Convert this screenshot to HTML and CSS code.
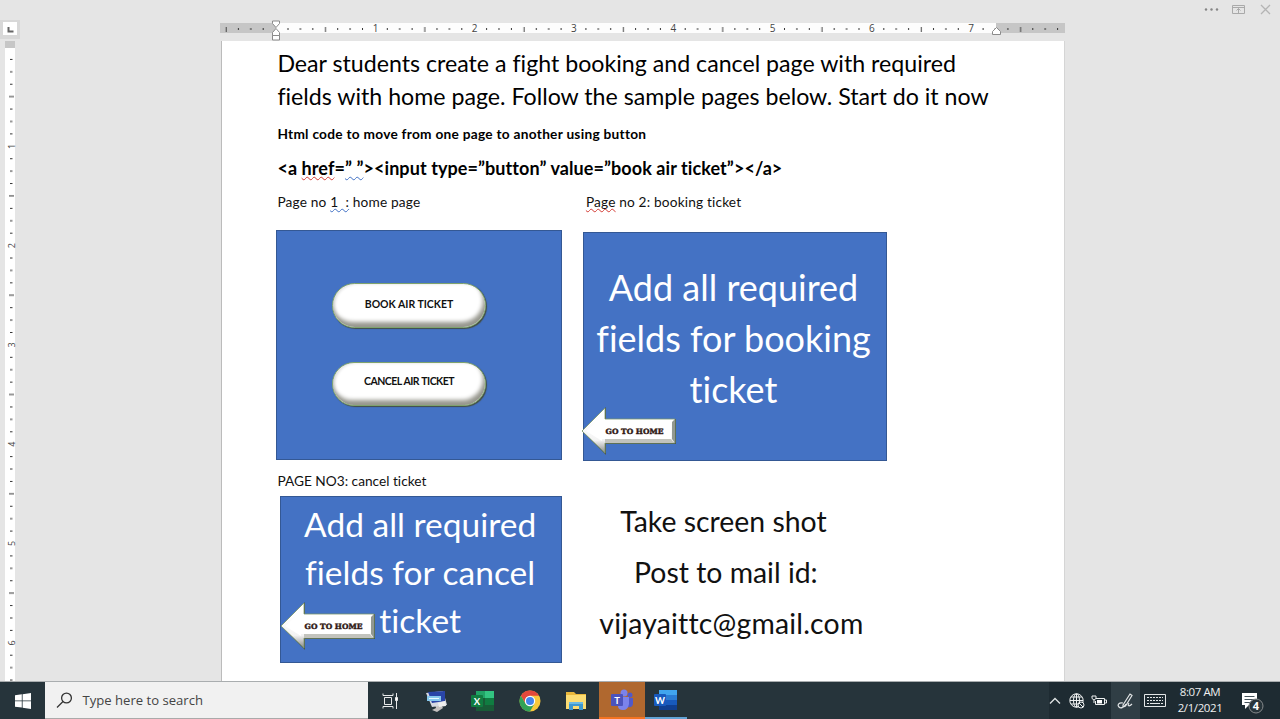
FILE: index.html
```html
<!DOCTYPE html>
<html lang="en">
<head>
<meta charset="utf-8">
<title>Document</title>
<link rel="stylesheet" href="styles.css">
</head>
<body>
<div class="desktop">
  <header class="titlebar">
    <svg width="70" height="20" viewBox="0 0 70 20" fill="none">
      <g fill="#858585"><circle cx="1" cy="9.5" r="1.2"/><circle cx="6.500" cy="9.5" r="1.2"/><circle cx="12" cy="9.5" r="1.2"/></g>
      <path d="M27.500 5.500h12v8h-12zM27.500 7.500h12M33.500 13V8.500M31.500 10.500l2-2 2 2" stroke="#a9a9a9"/>
      <path d="M56 5l9 9M65 5l-9 9" stroke="#b4b4b4" stroke-width="1.300"/>
    </svg>
  </header>
  <div class="workspace">
    <aside class="rail">
      <div class="tabstop"><svg width="14" height="13"><path d="M5.500 5v4.500h5" fill="none" stroke="#666" stroke-width="2"/></svg></div>
      <svg class="vruler" width="15" height="641" viewBox="0 0 15 641">
        <defs>
          <pattern id="vt" y="6" width="11" height="99.3" patternUnits="userSpaceOnUse">
            <path d="M5 12.400h2.500M5 24.800h2.500M5 37.200h2.500M5 62.100h2.500M5 74.500h2.500M5 86.900h2.500" stroke="#333"/>
            <path d="M4 49.600h5" stroke="#333"/>
          </pattern>
        </defs>
        <rect width="10" height="641" fill="#fff"/>
        <rect width="10" height="7" fill="#c6c6c6"/>
        <rect y="7" width="10" height="634" fill="url(#vt)"/>
        <g class="marks">
          <text transform="translate(9.500 105.300) rotate(-90)">1</text>
          <text transform="translate(9.500 204.600) rotate(-90)">2</text>
          <text transform="translate(9.500 303.900) rotate(-90)">3</text>
          <text transform="translate(9.500 403.200) rotate(-90)">4</text>
          <text transform="translate(9.500 502.500) rotate(-90)">5</text>
          <text transform="translate(9.500 601.800) rotate(-90)">6</text>
        </g>
      </svg>
    </aside>
    <main class="canvas">
      <svg class="hruler" width="845" height="21" viewBox="0 0 845 21">
        <defs>
          <pattern id="ht" x="55.600" width="99.3" height="21" patternUnits="userSpaceOnUse">
            <path d="M12.400 8v2M24.800 8v2M37.200 8v2M62.100 8v2M74.500 8v2M86.900 8v2" stroke="#333"/>
            <path d="M49.900 7v5" stroke="#444"/>
          </pattern>
        </defs>
        <rect y="3" width="845" height="10" fill="#c6c6c6"/>
        <rect x="56" y="3" width="720" height="10" fill="#fdfdfd"/>
        <rect width="838" height="21" fill="url(#ht)" x="2"/>
        <g class="marks">
          <text x="155.500" y="12">1</text><text x="254.700" y="12">2</text><text x="353.900" y="12">3</text><text x="453.300" y="12">4</text><text x="552.500" y="12">5</text><text x="651.900" y="12">6</text><text x="751.200" y="12">7</text>
        </g>
        <g fill="#fff" stroke="#8b8b8b">
          <path d="M52.500 1h7v2.500L56 7.500 52.500 3.500zM52.500 15.500v-3L56 8.500l3.500 4v3zM52.500 15.500h7v4.500h-7z"/>
          <path d="M772.500 14.500v-3L776.500 7.500l4 4v3z"/>
        </g>
      </svg>
      <article class="page">
        <h1 class="intro"><span class="l1">Dear students create a fight booking and cancel page with required</span><br><span class="l2">fields with home page. Follow the sample pages below. Start do it now</span></h1>
        <h2 class="sub">Html code to move from one page to another using button</h2>
        <p class="code">&lt;a <span class="spell">href</span>=<span class="gram">” ”</span>&gt;&lt;input type=”button” value=”book air ticket”&gt;&lt;/a&gt;</p>
        <div class="labels">
          <p class="label">Page no <span class="gram">1&nbsp; :</span> home page</p>
          <p class="label"><span class="spell">Page</span> no 2: booking ticket</p>
        </div>
        <div class="boards">
          <section class="board home">
            <div class="pill">BOOK AIR TICKET</div>
            <div class="pill tight">CANCEL AIR TICKET</div>
          </section>
          <section class="board booking">
            <p>Add all required<br>fields for booking<br>ticket</p>
            <svg class="arrow" width="96" height="50" viewBox="0 0 96 50"><use href="#arrow"/></svg>
          </section>
        </div>
        <p class="label third">PAGE NO3: cancel ticket</p>
        <div class="bottom">
          <section class="board cancel">
            <p>Add all required<br>fields for cancel<br><span class="last">ticket</span></p>
            <svg class="arrow" width="96" height="50" viewBox="0 0 96 50">
              <defs>
                <linearGradient id="face" x2="0" y2="1"><stop offset=".3" stop-color="#fff"/><stop offset=".72" stop-color="#f3f3f3"/><stop offset="1" stop-color="#888"/></linearGradient>
                <g id="arrow">
                  <path d="M1 25L25 1v12h70v25H25v11z" fill="#4d5b4c"/>
                  <path d="M1 25L24 2v11h70v24H24v10z" fill="url(#face)" stroke="#78956b" stroke-width=".8"/>
                  <path d="M24 37h69l-3-4H24z" fill="#c2c3bd"/>
                  <path d="M94 13v24l-3-4V16z" fill="#929891"/>
                  <path d="M5 25L21 10v6h69v17H21v2z" fill="#fff"/>
                  <text class="go" x="24.500" y="28" textLength="58" lengthAdjust="spacingAndGlyphs">GO TO HOME</text>
                </g>
              </defs>
              <use href="#arrow"/>
            </svg>
          </section>
          <section class="mail">
            <p class="m1">Take screen shot</p><p class="m2">Post to mail id:</p><p class="m3">vijayaittc@gmail.com</p>
          </section>
        </div>
      </article>
    </main>
  </div>
  <footer class="taskbar">
    <div class="start"><svg width="16" height="16" viewBox="0 0 16 16" fill="#fff"><path d="M0 2.200l6.800-.9v6.200H0zM7.600 1.200L16 0v7.500H7.600zM0 8.300h6.800v6.300L0 13.700zM7.600 8.300H16V16l-8.400-1.200z"/></svg></div>
    <div class="search"><svg width="17" height="16" viewBox="0 0 17 16" fill="none" stroke="#333" stroke-width="1.300"><circle cx="10.500" cy="6" r="4.900"/><path d="M7 9.500L1 15.500"/></svg><span>Type here to search</span></div>
    <div class="apps">
      <div class="app"><svg width="18" height="16" viewBox="0 0 18 16" fill="none" stroke="#e8eaeb"><path d="M1 .5v2h10v-2M1 15.500v-2h10v2M2.500 4.500h7v7h-7zM14.500 0v4M14.500 8v8"/><path d="M13.500 4.500h2v3h-2z" fill="#fff"/></svg></div>
      <div class="app"><svg width="24" height="24" viewBox="0 0 24 24"><path d="M10 15l5-1 3 5-6 4-5-2 4-2z" fill="#c5c1c0"/><path d="M1 4l17-2 4 14-15 2z" fill="#d6d9e2"/><path d="M3 3l17-1v10L7 14z" fill="#2945a8"/><path d="M2 7h14v5H2z" fill="#88c9ee"/><path d="M4 9.500h10" stroke="#e9faff"/><path d="M13 14l7-2 1 5-7 1z" fill="#eee"/></svg></div>
      <div class="app"><svg width="24" height="22" viewBox="0 0 24 22"><path d="M5 1h18v20H5z" fill="#21a366"/><path d="M14 1h9v7h-9z" fill="#33c481"/><path d="M5 8h9v7H5zM5 15h18v6H5z" fill="#185c37"/><path d="M14 8h9v7h-9z" fill="#107c41"/><rect y="5" width="12" height="12" rx="1" fill="#107c41"/><text class="letter" x="6" y="14.500">X</text></svg></div>
      <div class="app"><svg width="22" height="22" viewBox="0 0 22 22"><circle cx="11" cy="11" r="10.500" fill="#f9c83c"/><path d="M1.900 5.750A10.500 10.500 0 0 1 20.100 5.750H11L6.450 13.600z" fill="#e3483b"/><path d="M1.900 5.750A10.500 10.500 0 0 0 11 21.500L15.550 13.600 11 16.250 6.450 13.600z" fill="#32a257"/><circle cx="11" cy="11" r="5.200" fill="#fff"/><circle cx="11" cy="11" r="4" fill="#4384ec"/></svg></div>
      <div class="app"><svg width="22" height="20" viewBox="0 0 22 20"><path d="M1 1h8l2 2h10v15H1z" fill="#e9b73c"/><path d="M1 4h20v14H1z" fill="#fbdc73"/><path d="M4 11h14v8h-4v-4H8v4H4z" fill="#3d97cf"/><path d="M4 11h14v2H4z" fill="#69b9e4"/></svg></div>
      <div class="app teams"><svg width="24" height="22" viewBox="0 0 24 22"><circle cx="20" cy="6" r="2.500" fill="#5059c9"/><circle cx="14" cy="4" r="3.500" fill="#7b83eb"/><path d="M16 9h7v6q-1 4-5 3z" fill="#5059c9"/><path d="M8 8h11v7q-1 6-6 6t-5-4z" fill="#7b83eb"/><rect x="1" y="5" width="12" height="12" rx="1" fill="#4b53bc"/><text class="letter" x="7" y="14.500">T</text></svg></div>
      <div class="app word"><svg width="24" height="22" viewBox="0 0 24 22"><path d="M5 1h18v5H5z" fill="#41a5ee"/><path d="M5 6h18v5H5z" fill="#2b7cd3"/><path d="M5 11h18v5H5z" fill="#185abd"/><path d="M5 16h18v5H5z" fill="#103f91"/><rect y="5" width="12" height="12" rx="1" fill="#185abd"/><text class="letter" x="6" y="14.500">W</text></svg></div>
    </div>
    <div class="tray">
      <svg class="chev" width="12" height="8" viewBox="0 0 12 8" fill="none" stroke="#dfe3e4" stroke-width="1.300"><path d="M1 6.500l5-5 5 5"/></svg>
      <svg class="globe" width="16" height="16" viewBox="0 0 16 16" fill="none" stroke="#eef0f0"><circle cx="7.500" cy="7.500" r="6.700"/><ellipse cx="7.500" cy="7.500" rx="3" ry="6.700"/><path d="M1 7.500h13M2 4h11M2 11h11M7.500 1v13"/><circle cx="12" cy="12" r="3" fill="#1e2c33"/><path d="M10 10l4 4"/></svg>
      <svg class="batt" width="16" height="12" viewBox="0 0 16 12" fill="none" stroke="#eef0f0"><path d="M5 3.500h8.500v6h-9V6M14 5h1.500v3H14M1 1h4v2.500L3 5 1 3.500zM3 5v3"/><path d="M6 5h5v3.500H6z" fill="#fff" stroke="none"/></svg>
      <div class="pen"><svg width="18" height="18" viewBox="0 0 18 18" fill="none" stroke="#e3e6e7" stroke-width="1.200"><path d="M6 13L13 2l2 1.500L8.500 14 6 15zM6 11c-4-1-6 2-4 4s5 0 7-3M12 11c-2 3 0 4 3 1"/></svg></div>
      <svg class="keys" width="22" height="13" viewBox="0 0 22 13" fill="none" stroke="#e3e6e7"><path d="M.5.5h21v12H.5z"/><path d="M3 3.500h16M3 6.500h16" stroke-dasharray="2 1"/><path d="M3 9.500h2M6 9.500h10M17 9.500h2"/></svg>
      <div class="clock"><span>8:07 AM</span><span>2/1/2021</span></div>
      <svg class="note" width="24" height="24" viewBox="0 0 24 24"><path d="M1 3h15v12H8l-4 4v-4H1z" fill="#fff"/><path d="M3.500 6.500h10M3.500 9.500h10M3.500 12.500h6" stroke="#43525a"/><circle cx="15" cy="16" r="7" fill="#27343a" stroke="#85898b"/><text class="badge" x="15" y="20">4</text></svg>
    </div>
  </footer>
</div>
</body>
</html>
```
FILE: styles.css
```css
* { box-sizing: border-box; }
body { margin: 0; background: #e5e5e5; font-family: Lato, "Open Sans", sans-serif; font-variant-ligatures: none; color: #111; }
p, h1, h2 { margin: 0; font-weight: 400; white-space: nowrap; }
svg { display: block; flex: none; }
.desktop { width: 1280px; height: 719px; display: flex; flex-direction: column; overflow: hidden; }
.titlebar { height: 20px; display: flex; justify-content: flex-end; padding-right: 5px; }
.titlebar svg { overflow: visible; }
.workspace { height: 661px; display: flex; overflow: hidden; }
.rail { width: 220px; flex: none; }
.tabstop { width: 20px; height: 19px; background: #d8d8d8; padding: 2px 3px; margin-bottom: 2px; }
.tabstop svg { background: #fff; }
.vruler { margin-left: 5px; overflow: visible; }
.marks { font: 10px "Open Sans", sans-serif; fill: #444; text-anchor: middle; }
.vruler .marks { font-size: 9px; }
.canvas { width: 846px; flex: none; }
.page { width: 844px; height: 641px; margin-left: 1px; background: #fff; border-left: 1px solid #bbb; border-right: 1px solid #d5d5d5; padding: 5px 0 0 55.400px; }
.intro { font-size: 23.180px; line-height: 33px; height: 66px; color: #000; }
.l1, .l2 { position: relative; top: .5px; }
.sub { font-size: 13.700px; font-weight: 700; line-height: 20px; margin-top: 12px; letter-spacing: .270px; color: #000; }
.code { font-size: 18px; font-weight: 700; line-height: 24px; margin-top: 12px; letter-spacing: .080px; color: #000; }
.spell, .gram { text-decoration: underline wavy #d33a33 1px; text-underline-offset: 1px; text-decoration-skip-ink: none; }
.gram { text-decoration-color: #3f6fc4; }
.labels { display: grid; grid-template-columns: 308.500px 1fr; margin-top: 12px; }
.label { font-size: 13.700px; line-height: 20px; letter-spacing: .160px; }
.boards { display: flex; gap: 21px; margin: 18px 0 0 -1.400px; height: 231px; }
.board { background: #4472c4; border: 1px solid #345894; color: #fff; text-align: center; position: relative; }
.home { width: 286px; height: 230px; padding: 52px 0 0 55px; }
.pill { width: 154px; height: 45px; border-radius: 23px; background: #fff; border: 1px solid #7fa36d; color: #111; font-size: 10.500px; font-weight: 700; line-height: 41px; box-shadow: inset -2px -5px 4px #96968d, inset 2px 0 3px #ddd, 1px 1px 1px #444e45; margin-bottom: 34px; white-space: nowrap; }
.pill.tight { line-height: 37px; letter-spacing: -.520px; word-spacing: .5px; height: 44px; }
.booking { width: 304px; height: 229px; margin-top: 2px; padding-top: 30px; font-size: 36px; line-height: 51.200px; }
.booking p { margin: -1px 0 0 -3px; }
.arrow { position: absolute; left: -3px; top: 173px; }
.go { font: 900 7.300px "DejaVu Serif", serif; fill: #301713; stroke: #301713; stroke-width: .4px; }
.third { margin-top: 10px; letter-spacing: 0; }
.bottom { display: flex; margin-top: 5px; }
.cancel { width: 281.500px; height: 167px; margin-left: 3px; padding-top: 4px; font-size: 33.500px; line-height: 47.800px; }
.cancel p { margin-left: -2px; }
.cancel .arrow { top: 104px; left: -1px; }
.mail { width: 300px; margin-left: 16px; font-size: 28.400px; line-height: 51px; text-align: center; }
.m1 { padding-right: 9px; }
.m2 { padding-right: 4px; }
.m3 { padding-left: 7px; letter-spacing: .200px; }
.taskbar { height: 38px; background: #26343b; display: flex; border-top: 1px solid #a9adaf; }
.start { width: 45px; display: flex; align-items: center; justify-content: center; }
.search { width: 322.500px; background: #f1f1f1; display: flex; align-items: center; gap: 9.500px; padding-left: 11px; font: 13.100px "Open Sans", sans-serif; color: #444; border-bottom: 1px solid #aaa; }
.apps { display: flex; }
.app { width: 46.300px; display: flex; align-items: center; justify-content: center; }
.teams { background: #b0682f; border-bottom: 2px solid #f47321; }
.word { border-bottom: 2px solid #62a3d5; width: 42px; }
.letter { font: bold 9.500px Lato, sans-serif; fill: #fff; text-anchor: middle; }
.tray { margin-left: auto; display: flex; align-items: center; background: #1e2b32; }
.chev { margin-right: 8px; }
.globe { margin-right: 6px; }
.batt { margin-right: 4px; }
.pen { width: 29px; height: 37px; background: #303e45; display: flex; align-items: center; justify-content: center; margin-right: 4px; }
.clock { width: 70px; display: flex; flex-direction: column; align-items: center; font: 11.500px/16px "Open Sans", sans-serif; letter-spacing: -.400px; color: #f0f0f0; margin-top: -1px; }
.clock span { margin-left: -2px; }
.note { margin: 2px 15px 0 5px; }
.badge { font: bold 11px "Open Sans", sans-serif; fill: #fff; text-anchor: middle; }
```
